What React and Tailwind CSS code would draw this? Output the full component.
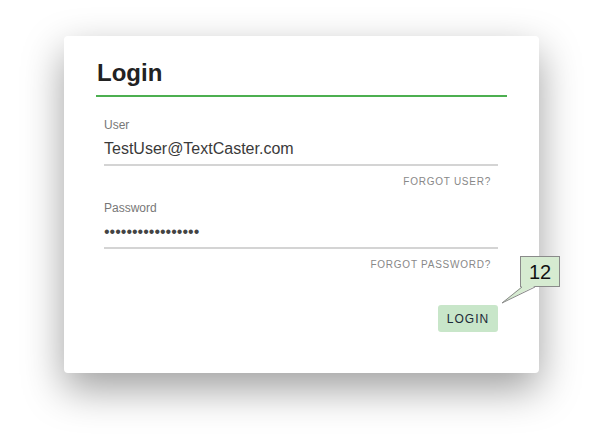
import React from "react";

export default function App() {
  const font = { fontFamily: '"Liberation Sans", Arial, sans-serif' };
  return (
    <div className="w-[599px] h-[434px] bg-white overflow-hidden" style={font}>
      <div className="pt-[36px] pl-[64px]">
        <div className="relative w-[475px] h-[337px] bg-white rounded-[4px] shadow-[0_16px_40px_rgba(0,0,0,0.38)] px-[32px] pt-[23px]">
          <div className="text-[24px] leading-[28px] font-bold text-[#222] pl-[1px] pb-[8px] border-b-2 border-[#4caf50]">
            Login
          </div>
          <div className="ml-[8px] mr-[9px] mt-[20px]">
            <div className="text-[12px] leading-[16px] text-[#777]">User</div>
            <div className="mt-[4px] text-[16px] leading-[24px] text-[#3a3a3a] pb-[3px] border-b-2 border-[#d4d4d4]">
              TestUser@TextCaster.com
            </div>
            <div className="mt-[10px] text-right text-[10px] leading-[12px] tracking-[0.75px] text-[#888] pr-[7px]">
              FORGOT USER?
            </div>
            <div className="mt-[12px] text-[12px] leading-[16px] text-[#777]">Password</div>
            <div className="mt-[4px] text-[16px] leading-[24px] text-[#444] pb-[3px] border-b-2 border-[#d4d4d4]">
              •••••••••••••••••
            </div>
            <div className="mt-[10px] text-right text-[10px] leading-[12px] tracking-[0.75px] text-[#888] pr-[7px]">
              FORGOT PASSWORD?
            </div>
            <div className="flex justify-end mt-[34px]">
              <button className="w-[60px] h-[27px] rounded-[3px] bg-[#c8e6c9] text-[12px] tracking-[1px] text-[#1c2a38] flex items-center justify-center">
                LOGIN
              </button>
            </div>
          </div>

          <div className="absolute left-[456px] top-[220px] w-[40px] h-[31px] bg-[#d6ebd1] border border-[#8a8a8a] flex items-center justify-center text-[20px] leading-[20px] text-[#111]">
            12
          </div>
          <svg
            className="absolute left-[436px] top-[249px]"
            width="40"
            height="20"
            viewBox="0 0 40 20"
          >
            <polygon points="22,1 35,1 2,18" fill="#d6ebd1" />
            <polyline points="22,2 2,18 35,2" fill="none" stroke="#8a8a8a" strokeWidth="1" />
          </svg>
        </div>
      </div>
    </div>
  );
}
